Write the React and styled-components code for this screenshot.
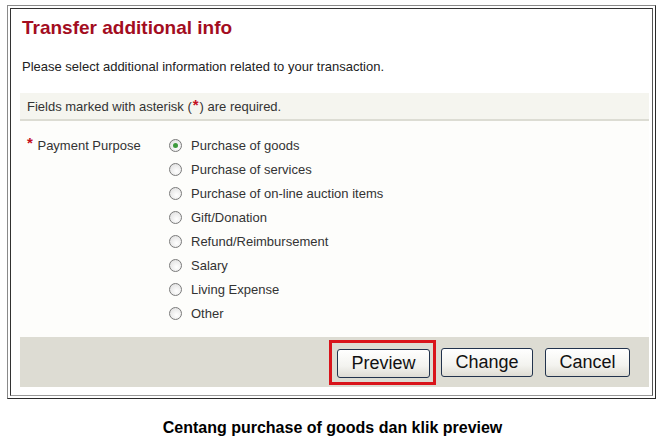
import React from 'react'
import styled, { createGlobalStyle } from 'styled-components';

const GlobalStyle = createGlobalStyle`
    body {
        margin: 0;
        background: #fff;
        font-family: "Liberation Sans", Arial, sans-serif;
    }
`;

const Page = styled.div`
    width: 661px;
    height: 440px;
    padding-top: 5px;
    box-sizing: border-box;
`;

const Frame = styled.div`
    margin-left: 7px;
    width: 649px;
    height: 394px;
    box-sizing: border-box;
    border: 1px solid;
    border-color: #8a8a8a #2a2a2a #2a2a2a #8a8a8a;
    padding: 2px;
`;

const Inner = styled.div`
    height: 100%;
    box-sizing: border-box;
    border: 1px solid;
    border-color: #333 #555 #999 #333;
    padding: 7px 3px 0 9px;
`;

const Title = styled.h1`
    margin: 0;
    padding-left: 2px;
    font-size: 19px;
    line-height: 23px;
    font-weight: bold;
    color: #a30d1f;
`;

const Intro = styled.p`
    margin: 20px 0 0;
    padding-left: 2px;
    font-size: 13px;
    line-height: 16px;
    color: #222;
`;

const FieldsBar = styled.div`
    margin-top: 18px;
    height: 26px;
    display: flex;
    align-items: center;
    padding-left: 7px;
    background: #f5f5ef;
    border-bottom: 2px solid #dcdcd3;
    font-size: 13px;
    color: #333;
`;

const Star = styled.span`
    color: #c4101e;
    font-size: 15px;
    font-weight: bold;
    margin: 0 1px;
    position: relative;
    top: -2px;
`;

const FormArea = styled.div`
    background: #fdfdfb;
    padding-top: 12px;
`;

const FieldRow = styled.div`
    display: flex;
    padding-bottom: 12px;
`;

const Label = styled.div`
    width: 143px;
    padding-left: 6px;
    font-size: 13px;
    line-height: 24px;
    color: #333;
`;

const Options = styled.div`
    display: flex;
    flex-direction: column;
`;

const Option = styled.label`
    display: flex;
    align-items: center;
    height: 24px;
    font-size: 13px;
    color: #333;
    gap: 9px;
`;

const Radio = styled.span`
    width: 11px;
    height: 11px;
    border-radius: 50%;
    border: 1px solid #7a7a7a;
    background: radial-gradient(circle at 60% 65%, #ffffff 0%, #e6e6e6 70%, #cfcfcf 100%);
    display: flex;
    align-items: center;
    justify-content: center;
    &::after {
        content: "";
        width: 5px;
        height: 5px;
        border-radius: 50%;
        background: ${({ $checked }) => ($checked ? '#3d9a3d' : 'transparent')};
    }
`;

const ButtonBar = styled.div`
    height: 50px;
    display: flex;
    align-items: center;
    justify-content: flex-end;
    padding-right: 19px;
    background: #dddcd3;
`;

const Highlight = styled.div`
    border: 3px solid #d9141b;
    padding: 6px 3px 4px 5px;
    margin-right: 5px;
`;

const Button = styled.button`
    width: ${({ $w }) => $w}px;
    height: 29px;
    box-sizing: border-box;
    border: 1px solid #22334d;
    border-radius: 3px;
    background: linear-gradient(#ffffff, #f3f3ef 60%, #dedcd4);
    font-family: "Liberation Sans", Arial, sans-serif;
    font-size: 18px;
    color: #111;
    padding: 0;
    margin-left: ${({ $ml }) => $ml || 0}px;
`;

const Caption = styled.div`
    text-align: center;
    margin-top: 20px;
    padding-left: 4px;
    font-size: 16px;
    font-weight: bold;
    color: #000;
`;

const purposes = [
    'Purchase of goods',
    'Purchase of services',
    'Purchase of on-line auction items',
    'Gift/Donation',
    'Refund/Reimbursement',
    'Salary',
    'Living Expense',
    'Other',
];

const App = () => {
  return (
    <Page>
    <GlobalStyle />
    <Frame>
    <Inner>
    <Title>Transfer additional info</Title>
    <Intro>Please select additional information related to your transaction.</Intro>
    <FieldsBar>Fields marked with asterisk (<Star>*</Star>) are required.</FieldsBar>
    <FormArea>
    <FieldRow>
    <Label><Star>*</Star> Payment Purpose</Label>
    <Options>
    {purposes.map((p, i) => (
        <Option key={p}>
        <Radio $checked={i === 0} />
        {p}
        </Option>
    ))}
    </Options>
    </FieldRow>
    <ButtonBar>
    <Highlight>
    <Button $w={93}>Preview</Button>
    </Highlight>
    <Button $w={92}>Change</Button>
    <Button $w={85} $ml={12}>Cancel</Button>
    </ButtonBar>
    </FormArea>
    </Inner>
    </Frame>
    <Caption>Centang purchase of goods dan klik preview</Caption>
    </Page>
    )
}

export default App;
